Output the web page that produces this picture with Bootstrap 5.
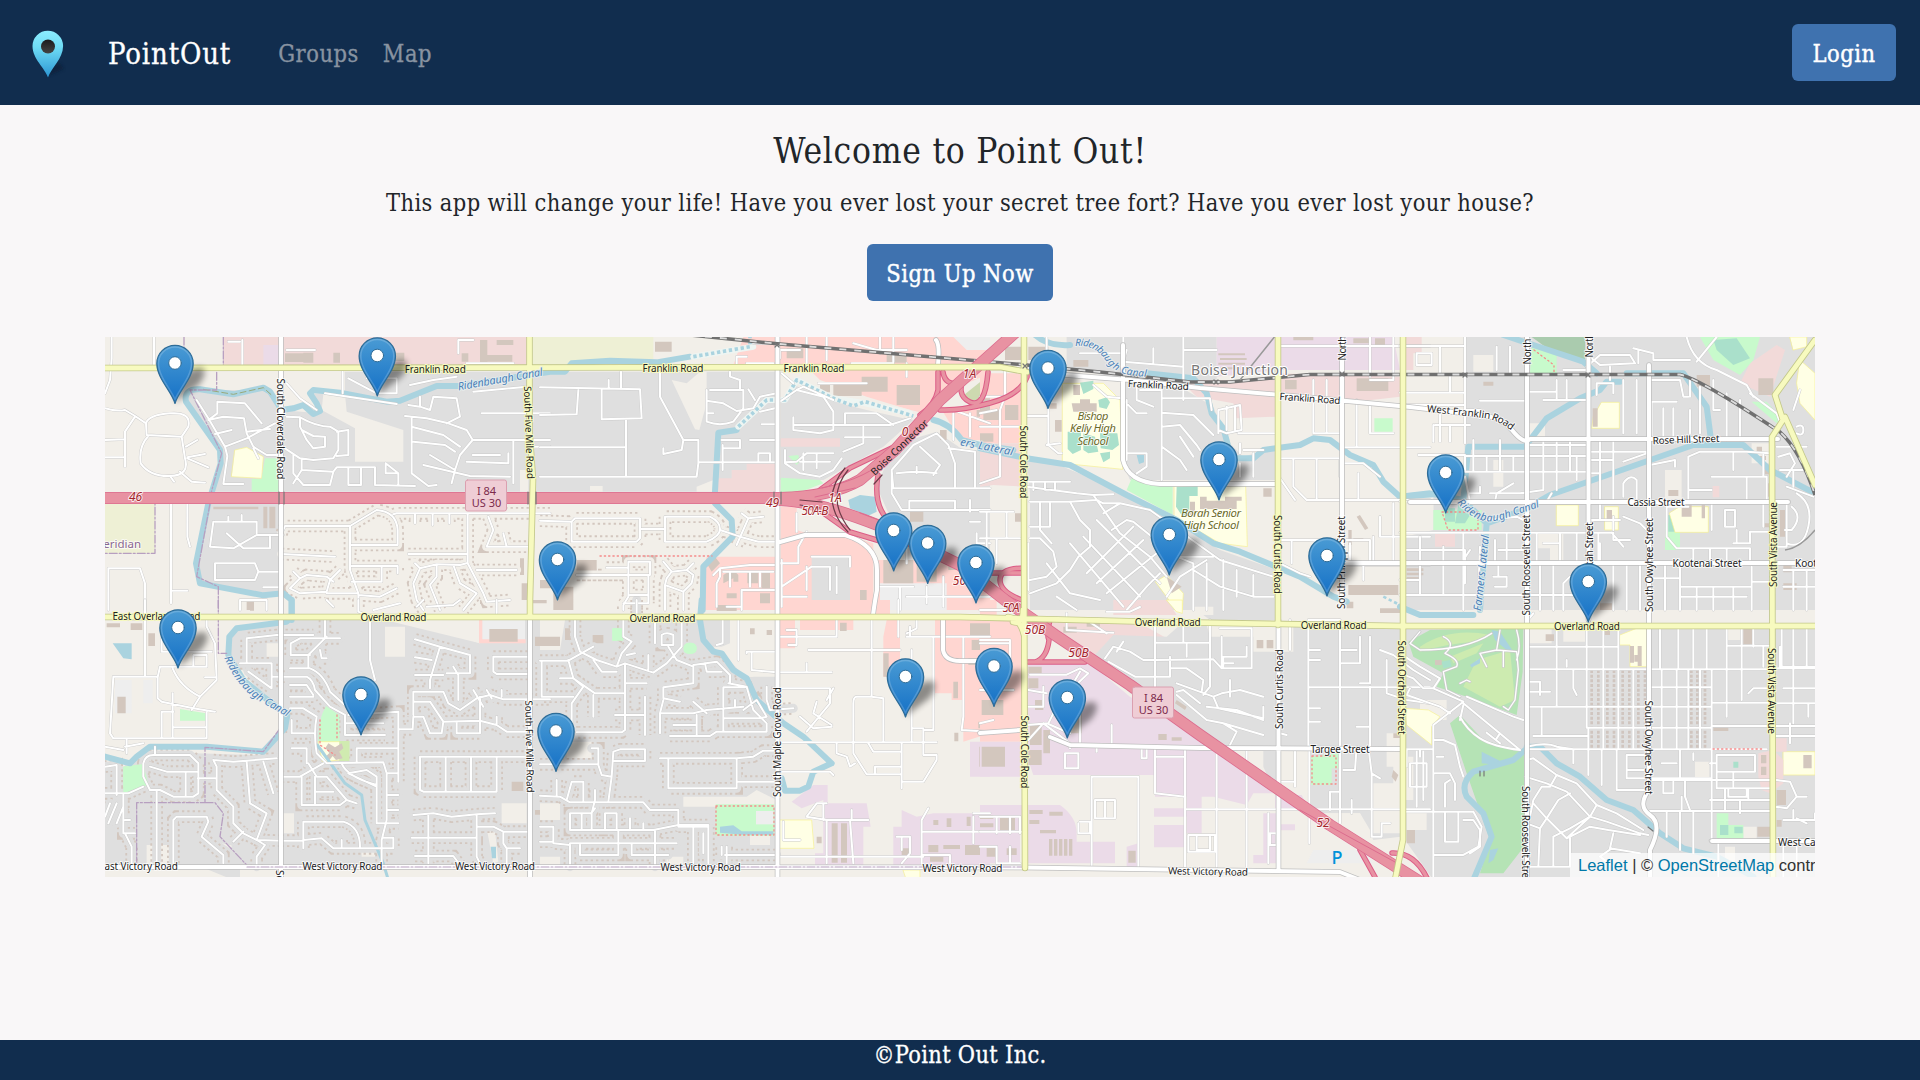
<!DOCTYPE html>
<html lang="en">
<head>
<meta charset="utf-8">
<meta name="viewport" content="width=device-width, initial-scale=1">
<title>PointOut</title>
<link href="https://cdn.jsdelivr.net/npm/bootstrap@5.3.0/dist/css/bootstrap.min.css" rel="stylesheet">
<style>
html{font-size:24px}
body{font-family:"Roboto Slab","DejaVu Serif Condensed","DejaVu Serif",serif;font-stretch:condensed;background:#f9f7f8;color:#212529;overflow:hidden}
.site-bar{background:#112d4e;height:105px;padding:0 24px 0 24px}
.site-bar .navbar-brand{font-size:29px;letter-spacing:.85px;color:#fff;margin:0 47px 0 0;padding:3px 0 0;line-height:36px;-webkit-text-stroke:.3px}
.site-bar .nav-link{font-size:23.4px;letter-spacing:.55px;color:#8893a1;padding:3px 0 0;margin-right:24px;line-height:36px;white-space:nowrap;-webkit-text-stroke:.3px}
.logo-pin{width:48px;height:60px;margin-right:36px}
.btn-point,.btn-point:hover{background:#3f72af;color:#fff;font-size:23.4px;line-height:36px;letter-spacing:.5px;border:0;border-radius:6px;height:57px;padding:12px 0 9px;text-align:center;-webkit-text-stroke:.4px}
.btn-login{width:104px}
.btn-sign{width:186px}
.welcome{font-size:35px;line-height:43px;letter-spacing:.75px;padding-top:1px;margin:0 0 12px}
.tagline{font-size:23.4px;line-height:36px;letter-spacing:.41px;margin:0 0 23px}
.intro{padding-top:24px}
.map-box{width:1710px;height:540px;margin-top:36px;background:#f2efe9}
.map-box svg{display:block}
.map-credit{right:0;bottom:0;width:245px;height:24px;padding-left:8px;background:rgba(255,255,255,.72);font:16.5px/24px "Liberation Sans",Arial,sans-serif;color:#333;white-space:nowrap;overflow:hidden}
.map-credit a{color:#0078a8;text-decoration:none}
.site-foot{background:#112d4e;color:#fff;height:40px;font-size:23.4px;line-height:31px;letter-spacing:.3px;-webkit-text-stroke:.3px}
.cs{stroke:#cacaca;stroke-width:8.5;fill:none}
.rd{stroke:#fff;stroke-width:6;fill:none}
.hs{stroke:#d3c7bf;stroke-width:38;stroke-dasharray:7 9;fill:none;stroke-linecap:butt;stroke-linejoin:miter}
.mg{stroke:#dfdfdf;stroke-width:27;fill:none}
.mb{stroke:#f2efe9;stroke-width:27;fill:none}
.res{fill:#dfdfdf}.lnd{fill:#f2efe9}.com{fill:#f2dad9}.ret{fill:#ffd6d1}.ind{fill:#ebdbe8}.prk{fill:#c8facc}.sch{fill:#ffffe5;stroke:#f7f18f;stroke-width:2}.frm{fill:#eef0d5}.bld{fill:#d3c7be}.pit{fill:#aae0cb}.glf{fill:#b5e3b5}.lgt{fill:#eee}.wat{fill:#aad3df}
.can{stroke:#aad3df;fill:none;stroke-width:18}
.bord{stroke:#b79fc0;stroke-width:1.3;stroke-dasharray:8 2 2 2;fill:none}
.bord path{vector-effect:non-scaling-stroke}
.lb text{font:10px "Noto Sans",sans-serif;fill:#222;text-anchor:middle;dominant-baseline:central;paint-order:stroke;stroke:rgba(255,255,255,.72);stroke-width:2px}
.lb .onY text{stroke:#f7fabf}
.lb .ex text{font-style:italic;font-size:12px;fill:#a3262c;stroke:rgba(255,255,255,.8)}
.lb .wt text{font-style:italic;font-size:11px;fill:#4a80b8;stroke:rgba(235,240,240,.8)}
.lb .sc text{font-style:italic;font-size:11.5px;fill:#6b6a28}
.lb .sh text{font-size:11px;fill:#7c2a4c;stroke:none}
</style>
<script src="https://cdn.jsdelivr.net/npm/bootstrap@5.3.0/dist/js/bootstrap.bundle.min.js"></script>
</head>
<body class="d-flex flex-column vh-100 m-0">
<nav class="site-bar d-flex align-items-center flex-shrink-0">
  <svg class="logo-pin" viewBox="0 0 48 60">
    <defs><linearGradient id="lg" x1="0" y1="0" x2="0" y2="1"><stop offset="0" stop-color="#8cecff"/><stop offset=".35" stop-color="#6fdcf5"/><stop offset="1" stop-color="#2b95d3"/></linearGradient>
    <linearGradient id="lh" x1="0" y1="0" x2="0" y2="1"><stop offset="0" stop-color="#1b1b1d"/><stop offset="1" stop-color="#444"/></linearGradient>
    <filter id="lb"><feGaussianBlur stdDeviation="1.5"/></filter></defs>
    <path d="M24 53L40 46 36 40 28 42z" fill="#0a1c35" opacity=".6" filter="url(#lb)"/>
    <path d="M24 54.500C21 45 8.500 36 8.500 23a15.300 15.300 0 0 1 30.600 0C39 36 27 45 24 54.500z" fill="url(#lg)"/>
    <circle cx="24" cy="23.500" r="7" fill="url(#lh)"/>
  </svg>
  <a class="navbar-brand" href="#">PointOut</a>
  <div class="d-flex flex-grow-1"><a class="nav-link" href="#">Groups</a><a class="nav-link" href="#">Map</a></div>
  <a class="btn btn-point btn-login" href="#">Login</a>
</nav>
<main class="flex-grow-1 d-flex flex-column align-items-center intro">
  <h1 class="welcome fw-normal">Welcome to Point Out!</h1>
  <p class="tagline">This app will change your life! Have you ever lost your secret tree fort? Have you ever lost your house?</p>
  <a class="btn btn-point btn-sign" href="#">Sign Up Now</a>
  <div class="map-box position-relative overflow-hidden">
<svg width="1710" height="540" viewBox="105 337 1710 540" stroke-linejoin="round" stroke-linecap="round">
<defs>
<linearGradient id="pg" x1="0" y1="0" x2="0" y2="1"><stop offset="0" stop-color="#4a9bd4"/><stop offset="1" stop-color="#1470c6"/></linearGradient>
<filter id="bl" x="-50%" y="-50%" width="200%" height="200%"><feGaussianBlur stdDeviation="3.2"/></filter>
<g id="pin"><path d="M0-1L5-22Q12-36 26-36 34-33 24-19z" fill="#000" opacity=".42" filter="url(#bl)"/>
<path d="M0 0C-3-12-18.200-25-18.200-40a18.200 18.200 0 0 1 36.400 0C18.200-25 3-12 0 0z" fill="url(#pg)" stroke="#2e6c97" stroke-width="1.200"/>
<path d="M0-4C-4-14-16.500-27-16.500-40a16.500 16.500 0 0 1 33 0C16.500-27 4-14 0-4z" fill="none" stroke="#fff" stroke-opacity=".18" stroke-width="1.500"/>
<circle cy="-40.500" r="6.300" fill="#fff" stroke="#2e6c97" stroke-width="1"/></g>
<!-- local streets, one set for each sheet of the map -->
<path id="a1" d="M15 235Q50 245 75 240L105 258 138 280M105 260L75 305V410M15 330 75 328M15 382H75M35 21V85L30 150 15 190M162 21V108M138 280Q145 255 210 250T265 290L245 320 200 318 140 315 138 280M145 318Q115 350 122 400 150 440 210 438T255 385L245 320M258 350L292 330M262 382L315 372M262 385L325 412M240 425L275 455 315 458M210 438L222 455M290 210L325 265 375 350 382 378 370 462H430M352 215L435 220 470 262 485 280M352 215V250L325 270M325 270 370 260 432 265 440 310 460 350 500 375H540M375 350L440 325 525 280M345 312 395 300M440 305 510 297M460 355 475 385M560 160L600 205M600 205L650 240M560 260L600 262Q650 290 690 290L715 305V360L700 385 640 390M600 262V290L620 330 640 355 675 350V320L640 318 605 300M710 305L745 300V375L710 378M555 355 600 385 640 390M605 390V420L700 425 710 412H825V465M605 420 580 460M580 375V430L610 465H690L700 425M745 415V465H783V415M825 465L945 468M857 400V430H895V465M857 400 895 430M925 225 960 230V200M960 230 990 240M915 258 980 265 1045 280 1100 300 1118 330H1350M935 260V430L985 468 1010 465M935 290 1030 315 1080 350M940 335 1035 345 1065 365M1118 330 1080 375 1065 420 1055 460M990 375 1065 420M970 405 1110 438 1230 440M1118 375H1200M1100 395 1225 400V370M1240 330V460M990 240 1000 200 1070 205 1080 260 1040 280M1145 250H1350M1300 350H1350M728 125V190M675 190 890 222M745 145 830 190 890 190V145H800M930 165 1000 150 1070 140M1120 185 1280 170M427 30V108M385 35H420M645 60H560M1075 70V30H1120M1100 100H1240"/>
<path id="a2" d="M545 610 555 588H750L830 540Q890 545 893 600V645H755M750 588V720L775 790V840M880 553 890 550H1350M945 553V580M998 553V585M1048 553V580M1103 550V700L1150 790 1160 815 1230 810M925 672H1103M545 672 705 680M755 708H893V730M845 708V755M755 755H845M580 725 600 745 570 775 600 790 680 785 690 750 720 720M600 745 620 735 680 740 700 755M680 790H775M775 795 840 800 890 775M945 700 960 715 1010 703 1080 705 1100 700M960 715 940 760 950 810 970 840M1010 703V740L990 765 1020 840M1060 705 1080 760 1130 790 1090 840M1130 720H1250M1165 560 1180 600 1160 650H1290M1210 610 1220 650"/>
<path id="a3" d="M213 520V820M262 520V620L270 650M215 782H262M25 840V715H120L135 760 135 840M340 575 330 650 400 655 470 615H550M345 575H470V610M380 610 430 655H510V620M385 560V575M425 555V575M345 700H465L475 725 465 750H345V700M475 725H535M490 772H545M420 840V810H500V840"/>
<path id="b1" d="M0 172 300 178 305 265 185 268V180M0 255 110 253 115 180M258 270V440M0 352H258M0 440H470L475 400V330H430L425 360 370 372V355M475 397H710M430 330 360 200V125M243 125V172M206 150V172M500 180V275Q540 290 580 275L610 235V180H510M500 212 550 220 590 243 640 235 660 200 710 190M500 250H520M570 125V140L600 150V180M625 178 645 210M545 330H600V355H548V410M548 345V420M655 395V370H690V395M630 330H705M660 245 705 235M665 283H710M720 215 770 180 850 200 880 245V300M760 262V300L840 310 880 300M760 285H1050L1110 265M770 180 790 170 880 210M915 280V250H1010L1060 285M970 290V340L910 365M915 322H1020M735 360V400L780 430 840 440 880 420 905 385M735 397 770 395 800 370 880 370M790 370V420M830 370V415M780 395H870M1060 475 1055 420 1120 345 1190 310 1225 345 1245 400V470M1060 475H1350M1070 430Q1130 420 1190 430M1130 410V430M1140 350 1200 405 1180 435M1225 355 1305 365V470M1108 540V512H1245V540M1055 420V490L1085 540H1350M1290 510V545M1290 575H1320M1310 610V640H1350M780 60H720V85M800 21V100M935 100H1060M590 110V80H620M620 100H700M725 130 760 160M835 160H980M940 40 1010 60 1100 60M1020 21V70M1100 100V140M860 21V90M1060 21V95M640 40H700M1240 240 1350 280M1240 250V330M1290 250V320"/>
<path id="b2" d="M0 572 95 575V635L290 635 300 625V565H105L95 575M300 597H370M380 560H510Q540 575 540 597T500 635H375V560M540 600 600 620 655 635H710M590 645 625 565 605 550M625 565 670 560M110 735H330V695H265V800L250 825V840M265 735H110M200 713H265M270 795H325V820H250M325 735V820M370 695 395 725 380 745 375 765V840M395 725 440 720 460 700M375 765 430 785 455 760 460 735 440 720M430 785V840"/>
<path id="b3" d="M520 735 540 715 630 705H710M540 715V740L530 760V830M550 725H700M605 780H710M605 780V840M570 730V770M630 730V770M660 730V770M560 830H600M720 700H775V650L800 605M815 680H930V710M725 770 815 710M815 710H870V780M890 710V790M725 800H800M800 710V780M770 550V605M725 690V830M1020 770H1120M1100 600V700M1160 770V820M1210 740V830M1100 800H1350M1080 770V840"/>
<path id="c1" d="M200 21V90M75 110V200H0M75 200 60 240V440L0 460M0 290H120M0 250 50 240M205 235V345L235 370H245M140 258H205M200 345 240 340M140 470 290 490 340 495 400 493M430 21V150M300 70H430M430 95 610 110M520 55V100M610 60H710M610 21V210M545 180V450M545 205H690L695 240M545 248 640 255 700 315M545 290 600 285 650 345 660 360M545 350 600 390 620 420M600 320 640 380M430 95 440 60M715 310V240L780 225 785 300 740 310 715 300M740 230V300M765 230V300M775 310H885M780 340V370M790 360H850M440 210V390M340 165 380 200 425 205 470 250 500 250M470 160V210L520 230M480 180H540M440 370H500V410L470 430M780 400V440M820 370V440M900 385H1080M940 385V470L980 510H1350M900 445 945 510M1010 385V510M1080 385V440M900 48H1350M1000 150V310H1080M1040 150V310M1130 210V350M1170 220V310H1240M1170 150H1240V21M1090 352H1350M1090 400H1150L1200 440M1135 430V510M1170 140V21M900 630H1080M935 630V700M985 630 1080 640M1100 630H1170V700M1090 705H1350M1110 640V700M1200 620H1350M1180 620V700M1200 560V620M1240 520V690M1150 750V700M150 515H270L350 510 370 520H420L510 540 720 690 880 740M150 625H180L220 665 230 710 200 740 150 750M150 590H210V520M180 515V600L215 640M270 515 300 570 330 600V650L295 680 270 720M340 495 420 610 510 680 560 740M370 550 420 520M395 600 440 570 460 575 590 680 640 700V840M320 730 460 590M350 760 490 630M380 790 530 670M270 720 230 760 150 790M270 640 430 830M310 620 480 800M350 570 540 760M200 700 270 790 360 810M230 800 290 840M440 840 500 770 540 730M560 800 600 740 680 690M640 720 720 770 820 800 880 800M730 690V840M680 700V840M770 720V800M820 735V800M590 680H700M900 700 960 730 990 740M160 455V480M195 455V480M225 455V480M140 455H270M0 545H100M0 625H120M20 545V760M50 625V700M80 545V625M145 640V780"/>
<path id="d1" d="M0 48H195V130M0 188H195M195 21V340M50 70H95V105H50zM120 50V130M290 50V120M330 50V130M380 21V840M150 140V188M0 225H195M195 240H240V265M240 212H375M105 285H210M100 285V335M120 250V335M150 285V335M55 375H195V420M220 330V425M195 378H560M195 425H560M260 378V420M300 330V425M340 378V425M430 330V480M470 330V480M510 330V425M530 380V450M385 345H560M430 210 500 210V150M470 150V210H560M385 185H470M490 120 560 120M0 515H100M195 440 210 515M205 490H240V470M340 460 290 490 285 515M360 490 430 480M270 490H370M455 490 440 515H560M560 110 600 75 690 75 705 100 600 105 575 85M630 110V150M590 195V160H640V190M700 55 760 70V90H870M715 60V100M860 21Q880 100 950 120 1010 150 1040 165L1060 200M950 21 890 95M748 140V840M670 150V310M710 150V310M755 215H830M755 215V320M790 235V320M820 235V320M870 150V200M900 170V310M870 240V310M940 150V240H960M755 150H840L850 200H865M980 190V330M1020 210V330M1050 190 1130 250 1145 290M1200 180 1180 240M565 330V700M565 365H745M600 330V515M640 330V515M560 390H640M670 395 740 370M670 500V460Q690 430 710 450V510M565 430H600M750 405 825 390V410M865 515V380L900 365H935M935 365H1040L1110 370M865 480H935M935 440H1040M1040 440V510M1010 440H1100V510M1000 370V420M0 608H640V630H690M635 608 670 650M15 660H195V760M0 700H560M60 620V690M130 650V700M190 610V690L210 660M285 630V700M320 610V700M295 660H370M260 570 350 560 370 570M410 608V700M430 640H480M480 610V690M530 608V700M565 570H620M600 515V570L660 570M595 610V700M640 560V600M670 560 720 580 740 600M600 640V700M640 700V840M680 700V840M720 700V840M490 840V760L510 740M0 795H560M0 750H60M60 700V795M130 700V795M190 700V840M240 650 235 790M280 740H320V770H285M295 740V700M420 700V840M460 700V840M800 520V620L830 655H1050V690M800 530H865M935 515V600M975 590V540H1005V590H975M1000 640H1050V605H1110M1010 600V640M1090 515V590M880 655V690M980 655V690M930 655V700M760 745H840M840 700V840M840 770H1050M840 800H1040M1055 710V840M1055 755H1110M1000 770V840M795 700V840M890 770V840M940 770V840M1160 520V650H1130M1175 530Q1210 560 1175 600L1155 600M1190 490Q1240 520 1225 590T1160 640M1150 720H1245M1150 770H1245M1180 720V840M1220 720V840M1135 380 1170 370 1185 400 1160 440M1190 290Q1210 280 1210 300T1190 310M1180 420V470M1160 470 1240 500M1130 350 1220 350M1090 440V370M1140 420H1230"/>
<path id="e1" d="M440 190V115L530 105H640M420 190H515V265L445 215M515 230H620Q640 240 645 270L690 320 735 345M570 205H630Q670 220 690 275L740 320M572 165V130L600 115H720M572 165H630M625 205V165L680 110M660 150 665 175H680M675 60V110M570 255H620L640 285M640 290H570M570 325H610L650 350Q640 400 650 460L680 490 850 487 860 520V660L845 720V800M575 360V400H640M575 445H620V490M670 490 600 530H550M600 530M625 490 650 530 680 530 740 600 770 610M605 530V615H720L740 600M645 530V615M648 575H700M735 345V405H855M745 345 895 335V545M735 370H850M770 485V445H895M725 490Q740 530 830 555V670M745 520 800 510 830 530V560L745 520M860 520H895M860 585H895M860 630H895M830 670H895M945 118 1020 140 1110 165V220H1040M1020 140 990 240V265M945 172 995 180M945 225H1030M1060 200 1075 225V300M940 345V275H1030L1045 310 1080 330 1130 295 1170 285 1210 298H1350M940 305H990L1030 365M940 350H970L990 400H1025L1030 365 1140 362 1190 375 1220 395H1280M895 388H938L940 350M1070 365V400H1140V290M1120 270 1150 320M1190 375V350M1175 295 1160 270M1205 290V270M1180 170V215L1190 222H1285M1180 170H1285M960 470H1290M960 470V570L970 575H1190V470M1037 470V575M1113 470V575M940 645 1000 640 1055 650 1130 643 1185 640M985 643V790M935 713H1130V645M1130 680 1180 680 1210 695H1290M1130 713V770L1140 790M945 768H1060L1080 795M1210 695V730L1220 745V795M1220 745H1260M130 490Q135 465 160 465H270L295 490V580L280 590H220L180 570H150L130 530zM150 500 200 515H290M257 515V585M340 480 400 485 530 475M340 480 350 500V570L400 620V670L430 700 470 720 500 640 450 610 440 485M490 485 520 580M430 695 400 725M470 720 545 722M470 720 495 735 470 770V800M220 790V660L230 650H320L325 665 305 710 370 765V790M545 722H610V745M610 720V665H730Q780 680 780 740M610 720 665 715 700 745H880V713H850M725 720V740M15 500 50 495V585M15 580H85L130 560M70 585V700H105M30 610 15 650M50 610 25 670M70 620 50 670M75 660H90M75 700 95 740V800M170 570V795M293 535H345"/>
<path id="e2" d="M135 0V230M320 55V80L345 130 350 240 300 290 275 330M180 200H320V165H280V200M180 200 173 232V295L185 305 280 325 345 335M218 205Q240 260 300 290M218 280V415M42 230H170M40 230 30 400 40 415H320V335M185 335H220M185 335V415M220 382H320M315 232H345M185 100V155H335M15 440 70 450M80 420V460M130 430 75 440M165 440V465M775 0V35L810 50V180L825 240M680 0 700 20M820 30 900 10M950 20 970 0M980 20 1060 15 1080 0M1190 0V40"/>
<path id="f1" d="M105 60V110L120 155 170 180 230 200 255 190 340 218 380 190 425 140V60M0 182H85L160 140M85 180 100 235 165 280H250M60 235H100L130 260 95 310V390M160 180 185 215H230M250 60V110L275 125 245 160 230 200M255 190V390L245 397H110M5 185V290H100M160 285V350M225 345H310M315 290V405M255 250H320M325 165V210M285 160 260 165M365 105Q380 95 400 105V135H365zM385 140 410 180 460 200M460 200V250L370 262V295L420 305M370 300 360 340V400M360 340H460L500 330 610 320M460 305 500 340M550 325V395M400 375H470V400M470 345V405M390 408H510L530 395H680V370L640 330 620 260 565 250M550 262V320M550 262H615M585 300V320M460 195 530 185 570 225V250M495 190 500 215H545M610 330 650 300 680 350 660 355H550M680 260V300L690 330 760 325M175 495V445H155M175 495 185 525 215 530 205 605M215 530 220 455 240 448H315V483H220M0 493H175M360 475H590V560M385 478V565H590V545H710M590 475 640 470 670 452H700M0 587 60 590 90 607H310L330 630H415V675L340 690 90 690V640H155V690M50 540V585M80 600 95 545H130V605M155 640 165 600V570M125 640V690M195 640V690L230 690V640H195M155 638 165 625M235 690V730M270 690V655M310 690V670M415 675H505V790M345 690V800M460 680V790M415 680 500 680M0 680H40V730L90 735V800M0 725H40M90 730H235V765L120 765V735M235 730H410M275 730V765H385M545 765V740M555 765H710M560 740V790M345 60V130M290 0V60M490 700V760"/>
<path id="f2" d="M805 150H1080M995 60V290M995 290H950Q940 290 940 310V460L980 523H1085M995 290 1030 295V425M720 217H875M800 190V215M720 265H870V310L800 395M720 427H1190M890 430V460L920 470 930 500 945 490M985 430 1000 455H1085M1005 523V500H1085M1085 427V565M1085 545H1150L1190 480V465H1150V390H1180V110M1115 385H1150M1115 150V425M780 350 820 385 875 380M830 305 820 340 875 375M880 265 860 300M720 515H870L880 525M595 60V180M548 60V130L530 135M620 160V155H710M635 160V210L710 217M720 110H890V60M740 90H770V135H745M1100 110H1350M1110 80V110M1130 60V85L1100 100M1075 0V110M1270 110V350L1265 390 1350 395M720 770H1150M860 610H830L800 650 860 660H985M850 610V660M935 630V660M860 660V790M930 660 940 790M1150 695H1350M1085 790 1110 760V710H1070M1085 710V750M1165 625 1145 660V795M1145 765H1230V790M1300 650V730M1350 640H1300M730 665V720H780"/>
<path id="g1" d="M150 224H260L300 205 325 220 240 300 205 370 140 375M145 320H190V260M145 420 190 370 270 430M205 372 270 400M270 430V445M395 375V435M300 320V430M0 50H60M0 120H90V200M0 270H100M0 395H110M260 40V90L400 98M380 35H450L480 21M320 60 380 100M375 175 400 140 450 155 490 180 525 180M410 155 430 125M385 185 465 230 570 230V170M525 60V270M525 128H690V60M525 180 700 178 725 205V110M610 60V128M690 60V260L670 285M570 205H620L670 240 665 275M620 170V130M590 250 700 290 725 280 780 270 850 290M590 285 680 360 730 370 850 405M700 290 715 325 850 355V320M680 320 770 330 850 360M750 240V290M730 200V170H800V140M760 190H730M725 205H815V85H720M590 275 610 270 660 310M730 370 770 395 745 445M525 440V580L615 590M615 440V800M710 460V800M525 470H610M335 530H475V800M335 530V800M615 628H1350M800 450V800M865 640V790M945 450V560M895 545H945M988 450V730M985 60V440M930 60V150M1140 110V190H1085M1170 110V250H1140M1085 150H1130M985 150H1020M985 180H1020M985 262H1350M985 325H1020M985 365H1020M1130 380H1170M1170 260V440M1080 60V670M1130 440 1125 510H1090M1165 440 1175 520 1200 535M1050 630V575H1080M1175 520V710H1205V670H1230M990 620V640M1115 600V640M985 60H1080M1200 150 1240 165 1300 210 1350 240M1220 180V280L1280 300 1350 310M1290 490H1340V560H1290zM900 400 920 405M145 270 200 280M395 435V380M350 455V435M255 460H295V505H255zM300 665H330V700H295V670M345 600H405V655H345zM375 600V655M625 705H705V755H625zM650 705V750H690V710M0 30H125M0 130H90M0 170 90 175M50 270H90M0 650H120V700M0 695H130M50 650V700M90 650V700M0 740H50V790H120M90 740V790M250 300 300 215M40 360 0 370M500 440V475H485V445M870 700H890V735H870zM1310 450V620M1330 450V600"/>
<path id="h1" d="M380 140H655M380 208H935M380 320H935M560 383H935M380 448H1100M400 408H565M470 80V208M560 80V383M610 80V208M655 80V208M700 208V448M610 208V448M655 208V448M565 383V525M605 448V555M520 448V490M650 448V570H740M680 465V535H930M680 465H740M680 510H740M780 80V208M835 80V208M880 80V208M920 80V208M865 208V448M900 208V448M785 208V448M830 208V448M935 208V448M980 80V350M1025 80V300M1060 80V140M980 137H1110M1090 140V200M750 262H935M935 208H1110M935 308H1110M935 378H1245M1140 140V200H1245M1125 310H1245M1150 265H1245M1125 205H1245M1145 80V200M1180 80V370M1220 80V200M1170 370V430M1120 408H1245M1225 310V350M1045 280 1060 265H1110M750 540H1110M750 633H1110M935 448V720M950 465H1065V515H950zM950 515V565H1110M975 565V630M1020 600V640M1045 600V570M930 490H950M930 600H1110M1000 515V560M840 450V540M785 490H830M880 480V460M840 633V750M880 633V760M800 633V710M930 722H1245M790 540V580H820V545M855 540V590L870 630M845 590V630M985 565V590H1040V565M1130 540 1170 545 1190 590 1160 625 1125 620M1190 590H1220M1150 660H1245V640M1180 630V660M1190 655 1220 670M1150 740V830M1190 740V830M955 720V830M425 320V408M520 208V265L530 285M500 180V200M380 140H415M385 245H420V280M385 275H450M470 208V320M420 285V250M380 65 400 40M375 530 440 550 500 575 570 650 620 665 720 700 745 705M400 475 470 525 530 550 590 615 650 640 730 690M370 360 340 350 200 290M190 310 360 450M180 350Q200 390 240 415T360 450M190 315 180 360M260 398 300 430M290 415 300 400M380 440Q440 425 470 440L520 448M380 480 400 475M470 525 450 560 425 560 400 600 390 650M440 655 400 610M380 670 420 685 440 655 475 600 510 580M440 655 500 715 570 650M500 715 570 680 625 690 720 705M460 710 510 685 570 650M460 710V800M510 715V800M420 685 415 800M385 800H510M640 700 630 745 720 760M635 745 600 770 640 800M590 615 570 650M15 170 60 200 120 235 100 265M0 220 40 235 70 265H100L190 305M30 265 20 285 120 320 150 340M190 305 100 375V830M0 448H100M15 635H220M100 420H130L165 435 180 500 190 530M130 520H150L165 550V600M135 620V550L150 540M105 520H130M20 450V500M60 450V470M110 470H130M135 635V725H175V635M220 635 245 680 235 740 190 765H100M190 660H220L240 690V740L210 760"/>
<path id="gc" d="M275 100Q200 150 60 150L30 130 60 95M130 110Q170 130 135 160 180 180 170 200L130 215 140 270 180 290M300 90 290 150 350 155 355 210 345 300 325 330 310 320M290 150 240 160 260 200M310 155V200M180 250 200 240 210 245M350 90Q365 140 350 180"/>
</defs>
<rect x="105" y="337" width="1710" height="540" fill="#f2efe9"/>
<!-- land use -->
<g transform="translate(100 330) scale(.33333)">
<path class="com" d="M370 21H1280V105H370z"/><path class="ind" d="M490 45h50v60h-50z"/><path class="frm" d="M1290 21H1660V100H1420L1290 115zM15 520H165V670H15z"/>
<path class="res" d="M270 180L500 180 540 240 660 250 640 190H735V125H1350V485H340L365 380 258 220zM330 520H540V790L500 795 300 760 290 700z"/>
<path class="lnd" d="M670 192H735L740 245 910 300V395H765V295L665 240zM545 120H735V185H640L550 230zM1260 420h25v65h-25z"/>
<path class="sch" d="M405 360L440 352 490 380 485 445 395 440z"/><path class="prk" d="M495 385H545V485H455V447H485z"/>
<g class="bld"><path d="M555 70h55v26h-55zM610 68h30v30h-30zM1140 30h22v68h-22zM1162 75h75v20h-75zM700 68h20v30h-20zM1190 30h50v15h-50zM1085 70h20v25h-20zM885 68h28v25h-28zM340 530h135v8H340zM490 530h12v65h-12zM508 530h18v65h-18zM440 815h22v25h-22zM640 820h22v18h-22zM1265 760h30v80h-30zM1260 685h12v50h-12z"/></g></g>
<g transform="translate(540 330) scale(.33333)">
<path class="res" d="M0 125H720V485H0z"/><path class="lnd" d="M395 150L440 160 480 125H500V220L478 300 465 298zM150 468h38v17h-38zM470 485V470L520 450V485z"/><path class="com" d="M520 485V445H575V420H620V400H710V485z"/>
<path class="ret" d="M610 21H1350V130L1190 200 1150 250 980 205 900 200 770 140 720 120V105H580zM500 680H715V840H490V720zM722 530H770V600L800 610H900L1000 640V840H722zM1010 690H1350V840H1010zM1200 230H1350V330L1260 330z"/>
<path class="res" d="M722 215L760 165 880 210 980 235 1120 270 1030 350 850 450H722zM1060 350L1140 320 1190 305 1270 360H1350V690H1100L1050 560 1010 470z"/>
<path class="res" d="M815 680H930V840H815z"/><path class="lnd" d="M722 110H800L840 150 980 200 1110 240 1090 265 980 240 900 220 770 165 735 210z"/><path class="com" d="M722 325H900V350H722z"/>
<path class="prk" d="M722 443L840 450 850 460 780 487H722zM745 378l30-3 5 20-10 10z"/><path fill="#cdd9b0" d="M1265 200L1340 140 1350 180 1310 210 1280 212z"/><path class="wat" d="M925 510L960 495 1005 500 1010 545 985 557 930 535z"/><path class="lgt" d="M1020 760H1220V840H1020zM1240 21H1350V60H1280z"/>
<g class="bld"><path d="M345 35h50v30h-50zM740 55h50v30h-50zM965 140h78v45h-78zM1070 165h70v60h-70zM880 160h85v38h-85zM1040 70h60v28h-60zM840 165h30v22h-30zM1030 690h90v70h-90zM1130 690h60v65h-60zM500 700l25-20 15 20-25 25zM550 735q30-20 45 0v20h-15v-10l-30 15zM622 725h32v35h-32zM665 725h25v50h-25zM560 790h30v15h-30zM660 790h30v30h-30zM720 820h60v20h-60zM830 815h40v25h-40zM960 780h20v50h-20zM1200 300h20v30h-20zM1310 240h30v20h-30zM110 690h60v50h-60zM0 750h50v25H0zM40 770h60v70H40zM1110 545h40v30h-40zM1225 690h25v30h-25z"/></g></g>
<g transform="translate(980 330) scale(.33333)">
<path class="ret" d="M0 130H130V340H0z"/><path class="com" d="M0 340H130V470L40 465 0 470zM600 150H890V260L770 265 760 220 650 200zM890 130L1260 140V200L1090 220 890 195z"/>
<path class="res" d="M140 385L250 410 440 490 540 550 720 660 890 720V840H150V490zM260 21H710V150H600V170L700 230 740 330 790 380 890 350V450H450L430 400V150L260 110z"/>
<path class="ind" d="M710 21H1240L1260 120H890L710 140z"/><path class="lnd" d="M250 410L430 420 450 450 440 490 360 455zM140 160H250V390L140 375z"/>
<path class="sch" d="M248 160H370L420 210 428 418 248 400zM583 467H797L802 650 720 640 583 560zM527 755L560 735 610 790 607 840H590z"/>
<path class="prk" d="M455 445L578 467V555L440 480zM1183 265h55v40h-55z"/>
<path class="pit" d="M300 158l40-6v25l-30 15zM355 210l25-8 10 15-10 20-22-5zM263 305h40v55l-25 12-15-15zM310 310l35 10 10 45-30 5-15-10zM360 310h52l5 35-20 15-35-5zM360 370l30-5v20l-20 12zM590 470l63-2v30h-25v50l-20 12-20-30z"/>
<path class="wat" d="M470 375h22v22l-15 5z"/>
<g class="bld"><path d="M275 220h25v-12h30v12h20v25h-70zM660 500h20v12h55v-12h50v12h-15v25H660zM75 50h50v40H75zM145 50h60v40h-60zM280 90h45v20h-45zM0 205h30v40H0zM10 240h50v30H10zM75 225h40v45H75zM0 310h40v25H0zM225 270h20v35h-20zM560 740l45 30-30 20zM850 475h25v25h-25zM915 150h35v28h-35zM1130 145h95v38h-95zM1105 765h150v30h-150zM715 70h80v6h-80zM720 84h80v6h-80zM715 98h80v6h-80zM720 112h60v6h-60zM940 21h60v10h-60zM1120 25h50v15h-50zM1185 25h30v20h-30zM280 165h20v30h-20zM630 515h15v40h-15zM105 550h18v25h-18zM200 220h30v16h-30zM1105 600h10v45h-10zM1120 625h30v8h-30zM1130 560l10-5 25 40-10 5z"/></g></g>
<g transform="translate(1400 330) scale(.33333)">
<path class="res" d="M190 21H1245V840H0V720L15 620 100 600V450H195z"/><path class="lnd" d="M15 21H190V450H15zM15 520H100V600H15zM220 75h60v50h-60zM280 390h30v80h-30zM385 280h50v40h-50zM795 420h50v90h-50zM1055 340h60v60h-60zM410 610h80v80h-40v-35h-40z"/>
<path class="com" d="M15 21H65V70H40V120H15zM105 610h60v40h-60zM938 468h20v34h-20zM1050 100L1130 45 1155 60 1110 200 1020 160z"/>
<path class="prk" d="M395 52L470 75V130H390zM100 540H245V600H100zM795 580H840V660H795zM900 21H1080L1060 90 1020 135 940 90zM1055 215H1100L1145 265 1130 280z"/>
<path fill="#aacbae" d="M395 21H555V100L470 75z"/><path class="pit" d="M940 30l70-5 40 60-50 20-50-45zM135 535h30v40h-30zM175 525l35 30-15 25h-30zM805 555h22v50h-22zM832 572h50v28h-50zM892 572h26v12h-26z"/>
<path class="sch" d="M605 217H658V295H575L580 260zM470 525H535V587H470zM615 530H655V600H615zM840 530L925 530V607H825L808 550zM1200 90L1245 130V270L1200 220 1190 160zM1170 21H1220V50L1180 60z"/>
<g class="bld"><path d="M578 235h15v55h-15zM845 525h30v35h-30zM905 525h10v40h-10zM1075 145h45v50h-45zM890 135h40v35h-40zM1140 540h15v80h-15zM805 480h30v18h-30zM1098 460h14v40h-14zM1090 580h25v12h-25zM1150 705h25v22h-25zM1070 350h16v20h-16zM1078 378h20v12h-20zM1095 405h14v28h-14zM1120 560h10v40h-10zM620 540h16v30h-16zM20 715h50v8H20zM20 728h50v8H20zM20 741h40v8H20zM1150 760h40v20h-40zM250 155h30v12h-30zM600 820h40v20h-40z"/></g></g>
<g transform="translate(100 600) scale(.33333)">
<path class="res" d="M400 85L570 60H855L1140 130V60H1660V840H400L290 795H15V490L70 500 130 455 480 465 560 360 480 280 390 160z"/>
<path class="lnd" d="M855 60H915L1140 130V60H1285V0H560V60zM855 80H915V170H855zM500 130h35v40h-35zM550 640h32v60h-32zM140 735h75v60h-75zM1205 610h75v60h-75zM1160 685l25 5 10 95-15 5zM390 735l30-20-30 30-25-15zM785 740h40v30h-40zM420 800H1350V840H420z"/><path class="lgt" d="M130 240h28v70h-28zM1145 60H1275V125H1145zM45 240h50v100H45z"/>
<path class="ret" d="M1137 60h10v58h130v12h-140z"/>
<path class="prk" d="M70 500L130 492 145 555 70 580zM678 318L718 345V425H652Q650 370 678 318zM240 327L318 340V362H240z"/><path fill="#d0ebb0" d="M718 423h30v60h-50v-15h20z"/><path class="sch" d="M652 425H720V480L665 488z"/><path class="wat" d="M38 130H95V178L70 175zM1172 740h16v35h-12z"/>
<g class="bld"><path d="M1168 87h85v38h-85zM1305 110h45v28h-45zM52 290h25v50H52zM145 100h20v38h-20zM685 430l20 12 20-12 5 15-12 10 10 20-20 5-10-12-12 15-10-12 12-12-12-15zM92 70h35v20H92zM1235 545h35v28h-35zM1305 630h28v14h-28zM1140 0h45v12h-45zM1290 0h50v10h-50zM20 70h40v12H20zM450 10h12v22h-12z"/></g></g>
<g transform="translate(540 600) scale(.33333)">
<path class="res" d="M0 60H480L540 60H570V140H520L620 230H710V840H0z"/><path class="lnd" d="M0 60H75L60 150H0zM570 60H710V140H640V230H610L545 140 570 130zM430 590H620L650 570 710 600V620H430zM0 610H60V660H0zM80 425h75v50H80zM0 770h60v40H0zM380 770h50v30h-50zM630 700h60v35h-60zM0 800H710V840H0z"/>
<path class="ret" d="M490 0H860L1050 0V60H940V90H780V60H720V0zM720 60H765V145H720zM1040 60H1080V230H1030V110zM1185 60H1350V400L1270 425V300H1235V280H1185z"/>
<path class="ind" d="M755 605L820 555H863V610H980L992 680H970V795H825V760H850V600L785 625zM1085 630L1130 650 1180 640H1350V795H1060V680H1085zM1290 425H1350V530H1290z"/>
<path class="sch" d="M720 660H815L822 745H720zM1090 810H1140V840H1100z"/><path class="prk" d="M527 613H703V707H527zM217 85H250V122H217zM430 145Q430 128 450 128T470 145 450 162 430 145z"/><path class="lgt" d="M648 633h52v40h-52z"/><path class="wat" d="M540 680l40-4 25 18h95v10h-95l-65-6z"/>
<g class="bld"><path d="M0 110h60v28H0zM158 105h32v25h-32zM75 85h15v35H75zM875 670h18v118h-18zM903 670h18v118h-18zM1318 440h32v60h-32zM1290 70h60v40h-60zM1295 120h45v30h-45zM1240 245h14v50h-14zM1325 300h30v45h-30zM1315 365h30v20h-30zM1243 398h12v26h-12zM1165 735h30v22h-30zM1170 770h40v15h-40zM1210 735h50v12h-50zM1275 735h65v30h-65zM1085 745h25v20h-25zM830 710h15v20h-15zM1030 160h16v70h-16zM1285 175h30v20h-30zM530 15h60v18h-60zM900 68h20v25h-20zM1220 655h14v26h-14zM1280 650h12v28h-12zM1180 660h15v15h-15zM630 85h14v18h-14zM680 90h16v15h-16z"/></g></g>
<g transform="translate(980 600) scale(.33333)">
<path class="ret" d="M0 60H125V425H0zM0 0H50V60H0z"/><path class="com" d="M200 60H420L480 70 560 115 450 115 340 170 280 140zM400 0H560L590 45H400z"/>
<path class="res" d="M400 105L560 110 600 75H890L1260 80V450H890L690 445 450 280 340 170zM610 0H890V60H690zM985 80H1350V700L1180 720 1140 640 985 640V450H890V590L850 500V450H985z"/>
<path class="lnd" d="M680 75H940V155H820V110H690zM1220 400h130v100h-130zM1180 550h90v150h-90zM1240 500h60v180h-60zM985 640H1140L1170 690 1170 720H1020zM640 20H700V45H640z"/>
<path class="ind" d="M140 195L260 190 330 190 450 290 700 440 880 580 820 580 800 615 700 590H665V700H620V590H525V440H615V590 L520 525H160L130 440V195zM0 425H120V530H0zM0 615H240Q290 650 290 700V725H405V790H140V700H0zM522 625H620V650H522zM522 675H615V742H522zM850 640h38v150H820v-25h30zM885 585h80l20 40h-100zM900 673h45v18h-45zM440 740l35-10v75h-35zM0 700H120V790H0z"/>
<path class="prk" d="M993 470L1075 460V505H1055V555H993zM1285 130L1350 90V180L1290 150z"/><path class="sch" d="M1270 330L1345 325V430L1280 370zM560 0H607V40L590 35z"/><path class="lgt" d="M1000 750H1160L1180 790H980z"/>
<g class="bld"><path d="M5 440h70v60H5zM5 300h65v45H5zM0 70h30v40H0zM145 200h40v20h-40zM145 235h30v30h-30zM165 300h25v30h-25zM150 375h35v60h-35zM190 390h20v70h-20zM145 450h40v45h-40zM445 752h22v36h-22zM207 717h10v50h-10zM222 717h10v50h-10zM237 717h10v50h-10zM252 717h10v50h-10zM267 717h10v50h-10zM148 630h40v12h-40zM208 635h40v12h-40zM148 660h30v12h-30zM180 690h48v10h-48zM0 645h40v12H0zM0 670h40v12H0zM60 650h45v40H60zM20 740h30v30H20zM80 745h30v20H80zM535 402h25v18h-25zM575 412h30v10h-30zM830 120h20v25h-20zM860 120h20v25h-20zM255 340h50v60h-50zM590 300l30 20-5 10-30-20zM1100 5h20v20h-20zM1200 25h60v14h-60zM250 80h40v18h-40zM320 60h40v20h-40zM1240 510l15 15-8 20-12-15zM1240 400h20v14h-20z"/></g></g>
<g transform="translate(1400 600) scale(.33333)">
<path class="res" d="M15 80H1245V840H100L15 720z"/><path class="lnd" d="M385 80h70v50h-70zM490 80h65v45h-65zM980 80h50v40h-50zM885 485h43v48h-43zM20 640h60v50H20zM60 300h80v60H60zM15 470h25v130H15zM975 740h30v60h-30zM1030 680h40v40h-40z"/>
<path class="glf" d="M25 125L90 90 370 85 368 215 350 345 200 290 110 260 130 220 40 170zM180 345L250 420 350 450 372 460V740L310 820H240L270 720 200 520 150 370z"/>
<path fill="#cdebb0" d="M60 140Q150 80 270 105L230 125Q140 130 60 155zM150 170L250 130 230 160 160 190zM190 260L230 180 330 150 345 300 300 320z"/><path class="wat" d="M275 90l25 5 40 60-20-5-35-30zM210 195l30-20v15l-25 12zM245 455l60 30-10 10-50-5zM270 750l25-5-15 35-15 10z"/>
<use href="#gc" class="cs"/><use href="#gc" fill="none" stroke="#fff" stroke-width="4"/>
<path class="sch" d="M15 325L85 330 120 350 95 380V435L20 375zM660 105L710 85H740V200H690V135H660zM1150 455H1245V525H1150z"/><path class="com" d="M1075 460L1120 450 1150 480V550L1110 580 1085 570 1075 530zM1120 415h40v40h-40z"/><path class="prk" d="M950 640H985V675H1030V715H950z"/><path class="pit" d="M960 675h25v30h-25zM1003 680h25v20h-25zM125 185l25-5 5 20-25 5zM1000 485h15v18h-15z"/>
<g class="bld"><path d="M437 103h25v20h-25zM1030 85h30v48h-30zM690 138h12v50h-12zM703 165h10v20h-10zM713 138h12v60h-12zM612 85h18v20h-18zM1130 570h28v45h-28zM1210 465h25v40h-25zM1083 465h16v25h-16zM1083 500h16v25h-16zM1072 680h40v30h-40zM940 383h45v10h-45zM1130 660h15v20h-15zM105 180h20v15h-20zM20 690h25v40H20z"/></g>
<path d="M575 210V445M595 210V445M622 210V445M642 210V445M668 210V445M688 210V445M715 210V445M735 210V445M874 210V445M892 210V445M915 210V445" stroke="#d0c5bf" stroke-width="8" stroke-dasharray="9 5" stroke-linecap="butt" fill="none"/></g>
<!-- houses along the streets -->
<g transform="translate(100 330) scale(.33333)"><use href="#a2" class="hs"/><use href="#a2" class="mb"/></g>
<g transform="translate(540 330) scale(.33333)"><use href="#b2" class="hs"/><use href="#b2" class="mb"/></g>
<g transform="translate(100 600) scale(.33333)"><use href="#e1" class="hs"/><use href="#e1" class="mg"/></g>
<g transform="translate(540 600) scale(.33333)"><use href="#f1" class="hs"/><use href="#f1" class="mg"/></g>
<!-- parks and schools that the house rows run into -->
<g transform="translate(100 600) scale(.33333)"><path class="prk" d="M678 318L718 345V425H655Q653 370 678 318z"/><path class="sch" d="M655 425H720V480L668 485z"/><path fill="#d0ebb0" d="M718 423h30v60h-30z"/><path class="bld" d="M685 430l20 12 20-12 5 15-12 10 10 20-20 5-10-12-12 15-10-12 12-12-12-15z"/><path class="prk" d="M70 500L130 492 145 555 70 580z"/></g>
<g transform="translate(540 600) scale(.33333)"><path class="prk" d="M217 85H250V122H217zM430 145Q430 128 450 128T470 145 450 162 430 145z"/></g>
<!-- canals -->
<g transform="translate(100 330) scale(.33333)"><path class="can" d="M575 870V810L550 790 490 796 300 760 288 700 325 520 362 400 360 360 258 215Q250 175 300 178L400 193 490 173 510 185 545 240 580 235 610 225 640 252 660 243 650 220 630 190 640 180 720 188 860 215 900 212 1010 168H1080L1350 125H1395L1415 100 1530 92 1670 97 1770 80"/><path d="M310 178L400 193 490 173 520 200" stroke="#99a97a" stroke-width="3" stroke-dasharray="18 10" fill="none"/></g>
<g transform="translate(540 330) scale(.33333)"><path class="can" d="M590 300L535 308 525 485M525 520L575 570 578 620 490 710 488 840M1180 270Q1230 280 1265 330L1320 345 1420 360"/><path class="can" style="stroke:#eef5f2" d="M595 290L680 210H735L770 150 880 205 975 220 1110 250M460 80L640 50"/><path class="can" style="stroke-width:11;stroke-dasharray:10 8;stroke-linecap:butt" d="M595 290L680 210H735L770 150 880 205 940 228 975 215 1120 258M460 80L630 50V21"/></g>
<g transform="translate(980 330) scale(.33333)"><path class="can" d="M160 10Q200 50 270 45M500 130L640 145 680 190 695 250 730 295 745 350M0 355L140 385 270 405 440 495 590 570 700 640 780 665 960 740 1060 800 1100 815M770 385H820L850 360 960 345 1000 325 1050 330 1110 375 1180 405 1210 455 1260 500 1370 492"/><path class="can" style="stroke-width:8;stroke-dasharray:10 8;stroke-linecap:butt" d="M1210 800L1290 840"/></g>
<g transform="translate(1400 330) scale(.33333)"><path class="can" d="M310 15L400 45 550 95 590 130M680 130H850L920 230 933 330M0 500 90 490 190 510 260 580 370 540 450 495 880 345H930L1030 345 1110 420 1235 485M190 510L205 350H375L440 265 540 205 600 180 620 155H660M260 580 240 840"/></g>
<g transform="translate(100 600) scale(.33333)"><path class="can" d="M575 0V50L560 65 410 85 388 110 385 165 430 240 490 290 562 345 555 385 490 455 320 440H150L110 470 90 490 15 470"/><path class="can" style="stroke-width:9" d="M652 435L735 550 785 585 795 660 850 790 865 840"/></g>
<g transform="translate(540 600) scale(.33333)"><path class="can" d="M485 0 480 60 490 120 520 155 545 160 580 210 620 235 650 300 730 370 790 410 875 490 820 515 805 560 780 572H735L725 535"/></g>
<g transform="translate(1400 600) scale(.33333)"><path class="can" d="M0 20 60 45 220 45M380 440 420 440 470 490 540 530 620 600 700 630 780 700 850 745 950 770 1060 830M375 450 340 480 220 515Q180 550 200 590L250 640 275 710 220 840"/></g>
<!-- boundaries -->
<g class="bord"><path transform="translate(100 330) scale(.33333)" d="M252 21V130M370 21V108H350V180H270L365 370 325 520H165V670H15M330 520 290 740 355 770V840"/><path transform="translate(100 600) scale(.33333)" d="M355 0V160H380M110 795V608H315V442L490 455 540 385V340M315 608H345L370 640 360 710 440 795"/></g>
<!-- local streets -->
<g transform="translate(100 330) scale(.33333)"><use href="#a1" class="cs"/><use href="#a2" class="cs"/><use href="#a3" class="cs"/><use href="#a1" class="rd"/><use href="#a2" class="rd"/><use href="#a3" class="rd"/></g>
<g transform="translate(540 330) scale(.33333)"><use href="#b1" class="cs"/><use href="#b2" class="cs"/><use href="#b3" class="cs"/><use href="#b1" class="rd"/><use href="#b2" class="rd"/><use href="#b3" class="rd"/></g>
<g transform="translate(980 330) scale(.33333)"><use href="#c1" class="cs"/><use href="#c1" class="rd"/></g>
<g transform="translate(1400 330) scale(.33333)"><use href="#d1" class="cs"/><use href="#d1" class="rd"/></g>
<g transform="translate(100 600) scale(.33333)"><use href="#e1" class="cs"/><use href="#e2" class="cs"/><use href="#e1" class="rd"/><use href="#e2" class="rd"/></g>
<g transform="translate(540 600) scale(.33333)"><use href="#f1" class="cs"/><use href="#f2" class="cs"/><use href="#f1" class="rd"/><use href="#f2" class="rd"/></g>
<g transform="translate(980 600) scale(.33333)"><use href="#g1" class="cs"/><use href="#g1" class="rd"/></g>
<g transform="translate(1400 600) scale(.33333)"><use href="#h1" class="cs"/><use href="#h1" class="rd"/></g>
<g fill="none" stroke="#f58b8b" stroke-width="1.300" stroke-dasharray="1.300 3"><path d="M600 556H712M716 806H774V835H716zM1713 749H1763M1442 512h36v18h-30zM1312 756h24v28h-24zM320 720v25l15 10M337 715v25M1534 350l20 15v8"/></g>
<!-- collector roads -->
<g fill="none"><path d="M281 337V877M530 615V877M777.500 337V877M1342 337V600M1278.500 620V870M1527 337V877M1588.500 337V620M1649 365V790Q1637 806 1650 815T1650 850V877M105 867H777L1024 867.500 1200 870 1340 872 1360 880M1028 372L1130 380 1200 388 1315 398 1410 407 1470 414Q1500 415 1512 430T1530 439H1778M1123 345V460Q1128 482 1160 484H1278M1410 502H1788M1340 563H1815M1070 745L1200 748 1400 749M1712 841H1815M780 542 805 535H845Q877 545 877 570V590Q875 600 873 615M943 620V650Q945 661 960 661H980M936 340Q940 345 938 365M980 733 1020 730M1050 737 1070 745" stroke="#bfbfbf" stroke-width="5.500"/>
<path d="M281 337V877M530 615V877M777.500 337V877M1342 337V600M1278.500 620V870M1527 337V877M1588.500 337V620M1649 365V790Q1637 806 1650 815T1650 850V877M105 867H777L1024 867.500 1200 870 1340 872 1360 880M1028 372L1130 380 1200 388 1315 398 1410 407 1470 414Q1500 415 1512 430T1530 439H1778M1123 345V460Q1128 482 1160 484H1278M1410 502H1788M1340 563H1815M1070 745L1200 748 1400 749M1712 841H1815M780 542 805 535H845Q877 545 877 570V590Q875 600 873 615M943 620V650Q945 661 960 661H980M936 340Q940 345 938 365M980 733 1020 730M1050 737 1070 745" stroke="#fff" stroke-width="4"/>
<path d="M247 867H1024" stroke="#b79fc0" stroke-width="1.200" stroke-dasharray="8 2 2 2"/></g>
<!-- railway -->
<g fill="none" stroke-linecap="butt"><path d="M690 335L780 344 1015 364 1100 372 1190 382H1230L1310 374.500H1680Q1700 379 1780 432 1800 450 1815 495" stroke="#707070" stroke-width="3.500"/><path d="M690 335L780 344 1015 364 1100 372 1190 382H1230L1310 374.500H1680Q1700 379 1780 432 1800 450 1815 495" stroke="#ddd" stroke-width="1.800" stroke-dasharray="7 8"/><path d="M1240 380L1280 330M1815 530Q1800 548 1785 550" stroke="#999" stroke-width="1.500"/></g>
<!-- motorway -->
<g fill="none"><path d="M938 372V390Q935 405 920 415M943 372Q945 386 960 383M1027 372V377Q1020 395 990 403T940 410M965 375Q955 395 970 402T988 372M820 490 850 468 900 444M878 475Q873 505 888 520M815 507 850 532 880 541M1024 568Q1000 568 1000 580T1022 600M1024 573 985 573M1028 662H1085M1050 620Q1046 635 1049 640 1047 658 1035 662M1360 850 1375 877M1392 853Q1415 852 1428 880" stroke="#dc5c86" stroke-width="5.500"/><path d="M938 372V390Q935 405 920 415M943 372Q945 386 960 383M1027 372V377Q1020 395 990 403T940 410M965 375Q955 395 970 402T988 372M820 490 850 468 900 444M878 475Q873 505 888 520M815 507 850 532 880 541M1024 568Q1000 568 1000 580T1022 600M1024 573 985 573M1028 662H1085M1050 620Q1046 635 1049 640 1047 658 1035 662M1360 850 1375 877M1392 853Q1415 852 1428 880" stroke="#e892a2" stroke-width="3.500"/>
<path d="M105 498H780Q830 497 860 480L895 450 940 400 1018 330M780 500Q820 502 880 526L960 565 1005 600 1055 635 1130 685 1200 735 1330 825 1425 885" stroke="#dc6c8e" stroke-width="12"/><path d="M105 498H780Q830 497 860 480L895 450 940 400 1018 330M780 500Q820 502 880 526L960 565 1005 600 1055 635 1130 685 1200 735 1330 825 1425 885" stroke="#e892a2" stroke-width="10.500"/><path d="M822 488Q870 478 890 455M860 513 905 530M815 497 855 488M1300 810 1395 862" stroke="#dc6c8e" stroke-width="1"/>
<path d="M848 470Q825 498 850 530M845 468Q818 500 848 532M874 484L882 475M800 500 822 502M800 505 820 508" stroke="#6d3c48" stroke-width="1.200"/></g>
<!-- main streets -->
<g fill="none"><path d="M105 368 1000 367 1027 372M529.500 337V430L533 480 530 600V617M105 617H960L1160 622 1400 626H1815M1024 337V530L1025 868M1278 337V625M1403 337V626V840L1395 880M1815 340 1775 395 1783 420 1772 437 1773 877M1785 417 1815 485M1013 622Q1023 625 1023 610M1024 635Q1020 618 1008 617" stroke="#c3c88a" stroke-width="6.500"/><path d="M105 368 1000 367 1027 372M529.500 337V430L533 480 530 600V617M105 617H960L1160 622 1400 626H1815M1024 337V530L1025 868M1278 337V625M1403 337V626V840L1395 880M1815 340 1775 395 1783 420 1772 437 1773 877M1785 417 1815 485M1013 622Q1023 625 1023 610M1024 635Q1020 618 1008 617" stroke="#f7fabf" stroke-width="4.800"/></g>
<g stroke="#777" stroke-width="1.200"><path d="M279 492v12M284 492v12M528 492v12M536 492v12M774 492v12M781 492v12M1023 364l4 4m0-4-4 4M1340 372l4 4m0-4-4 4M1463 373l4 4m0-4-4 4M1586 373l4 4m0-4-4 4M775 343l4 4m0-4-4 4M1214 380l4 4m0-4-4 4M1480 771v5M1484 771v5M1648 827l5 4"/></g>
<!-- labels -->
<g class="lb">
<g class="onY">
<text x="435.300" y="368.700" textLength="61">Franklin Road</text><text x="673" y="368" textLength="61">Franklin Road</text><text x="814" y="367.700" textLength="61">Franklin Road</text>
<text x="156.500" y="616" textLength="88">East Overland Road</text><text x="393.500" y="617" textLength="66">Overland Road</text><text x="662.500" y="617.500" textLength="66">Overland Road</text><text x="1167.700" y="622" textLength="66">Overland Road</text><text x="1333.700" y="625" textLength="66">Overland Road</text><text x="1587" y="625.500" textLength="66">Overland Road</text>
<text transform="translate(529.500 432.500) rotate(88)" textLength="93">South Five Mile Road</text><text transform="translate(1024 462) rotate(90)" textLength="73">South Cole Road</text><text transform="translate(1024.500 752) rotate(90)" textLength="73">South Cole Road</text><text transform="translate(1278 554.500) rotate(90)" textLength="79">South Curtis Road</text><text transform="translate(1402 687.500) rotate(90)" textLength="94">South Orchard Street</text><text transform="translate(1772.500 544.500) rotate(-90)" textLength="85">South Vista Avenue</text><text transform="translate(1771.500 691) rotate(90)" textLength="86">South Vista Avenue</text>
</g>
<text transform="translate(1158.500 384.500) rotate(3)" textLength="61">Franklin Road</text><text transform="translate(1310 398) rotate(4)" textLength="61">Franklin Road</text>
<path id="wf" d="M1427 408Q1470 412 1490 415 1503 419 1512 426" fill="none"/><text style="text-anchor:start"><textPath href="#wf">West Franklin Road</textPath></text>
<text transform="translate(1686 439) rotate(-2)" textLength="67">Rose Hill Street</text><text x="1656" y="501.500" textLength="57">Cassia Street</text><text x="1707" y="563" textLength="69">Kootenai Street</text><text x="1795" y="563" style="text-anchor:start">Kootenai</text>
<text transform="translate(280.500 429) rotate(90)" textLength="101">South Cloverdale Road</text><text transform="translate(530 746.500) rotate(89)" textLength="92">South Five Mile Road</text><text transform="translate(280 870) rotate(90)" style="text-anchor:start">South</text>
<text transform="translate(777 742) rotate(-90)" textLength="110">South Maple Grove Road</text><text transform="translate(1278.500 689) rotate(-90)" textLength="80">South Curtis Road</text><text transform="translate(1341 562.500) rotate(-90)" textLength="93">South Philippi Street</text>
<text transform="translate(1342 348) rotate(-90)" textLength="25">North</text><text transform="translate(1527 351.500) rotate(-90)" textLength="26">North</text><text transform="translate(1589 345) rotate(-90)" textLength="25">North</text>
<text transform="translate(1526 565) rotate(-90)" textLength="101">South Roosevelt Street</text><text transform="translate(1525.500 836.500) rotate(90)" textLength="101">South Roosevelt Street</text><text transform="translate(1588.500 547) rotate(-90)" textLength="50">Utah Street</text><text transform="translate(1649 565) rotate(-90)" textLength="94">South Owyhee Street</text><text transform="translate(1648.500 747.500) rotate(90)" textLength="94">South Owyhee Street</text>
<text x="138.500" y="865.500" textLength="79">East Victory Road</text><text x="342.500" y="865.500" textLength="80">West Victory Road</text><text x="495" y="865.500" textLength="80">West Victory Road</text><text x="700.600" y="866.500" textLength="80">West Victory Road</text><text x="962.500" y="867.500" textLength="80">West Victory Road</text><text transform="translate(1208 871) rotate(1)" textLength="80">West Victory Road</text>
<text x="1340" y="749" textLength="59">Targee Street</text><text x="1778" y="841.500" style="text-anchor:start">West Cassia</text>
<text transform="translate(899 447) rotate(-44)" textLength="75" style="stroke:#e892a2">Boise Connector</text>
<text x="1239.500" y="369" textLength="97" style="font-size:14px;fill:#777;stroke:#fff">Boise Junction</text>
<text x="141" y="543.500" style="text-anchor:end;font-size:11.500px;fill:#8a6791">Meridian</text>
<text x="1337" y="857" style="font-size:18px;font-weight:500;fill:#0092da;stroke:none">P</text>
<g class="ex"><text x="135.500" y="496">46</text><text x="772.500" y="502">49</text><text x="835" y="497">1A</text><text x="815" y="510" textLength="27">50A-B</text><text x="905" y="431">0</text><text x="969.500" y="373">1A</text><text x="963" y="580">50B</text><text x="1011" y="607.500" textLength="17">50A</text><text x="1035" y="629">50B</text><text x="1078.500" y="652.500">50B</text><text x="1323" y="822">52</text></g>
<g class="wt"><path id="c2" d="M1075 342Q1098 340 1110 360 1118 372 1148 373" fill="none"/><path id="c3" d="M1460 500Q1478 522 1500 516L1545 501" fill="none"/><path id="c4" d="M228 656Q240 685 262 698L292 715" fill="none"/>
<text transform="translate(500 378.500) rotate(-10)" textLength="86">Ridenbaugh Canal</text><text style="text-anchor:start;font-size:10px"><textPath href="#c2">Ridenbaugh Canal</textPath></text><text style="text-anchor:start;font-size:10.5px"><textPath href="#c3">Ridenbaugh Canal</textPath></text><text style="text-anchor:start;font-size:10.5px"><textPath href="#c4">Ridenbaugh Canal</textPath></text><text transform="translate(987 446) rotate(11)" textLength="54">ers Lateral</text><text transform="translate(1480.500 573) rotate(-84)" textLength="76">Farmers Lateral</text></g>
<g class="sc"><text x="1093" y="415" textLength="31">Bishop</text><text x="1093" y="427.500" textLength="46">Kelly High</text><text x="1093" y="440" textLength="31">School</text><text x="1211" y="512" textLength="60">Borah Senior</text><text x="1211" y="524.500" textLength="56">High School</text></g>
<g class="sh"><g fill="#efcdd5" stroke="#dba0b0" stroke-width="1"><rect x="465.500" y="480" width="41" height="31" rx="2"/><rect x="1132.500" y="687" width="41" height="31" rx="2"/></g><text x="486.500" y="490">I 84</text><text x="486.500" y="502.500">US 30</text><text x="1153.500" y="697">I 84</text><text x="1153.500" y="709.500">US 30</text></g>
</g>
<!-- pins -->
<g><use href="#pin" x="377.300" y="396"/><use href="#pin" x="175" y="403.500"/><use href="#pin" x="1048" y="408.500"/><use href="#pin" x="1219" y="500"/><use href="#pin" x="1445.700" y="513"/><use href="#pin" x="893.700" y="571"/><use href="#pin" x="1169.300" y="575"/><use href="#pin" x="927.700" y="583.500"/><use href="#pin" x="1327" y="596"/><use href="#pin" x="557.500" y="600"/><use href="#pin" x="976" y="603"/><use href="#pin" x="1588.300" y="622"/><use href="#pin" x="178" y="668"/><use href="#pin" x="994" y="706.500"/><use href="#pin" x="905.500" y="717"/><use href="#pin" x="361" y="735"/><use href="#pin" x="1067.300" y="738"/><use href="#pin" x="556" y="771.500"/></g>
</svg>
    <div class="map-credit position-absolute"><a href="#">Leaflet</a> | © <a href="#">OpenStreetMap</a> contributors</div>
  </div>
</main>
<footer class="site-foot text-center flex-shrink-0">©Point Out Inc.</footer>
</body>
</html>
